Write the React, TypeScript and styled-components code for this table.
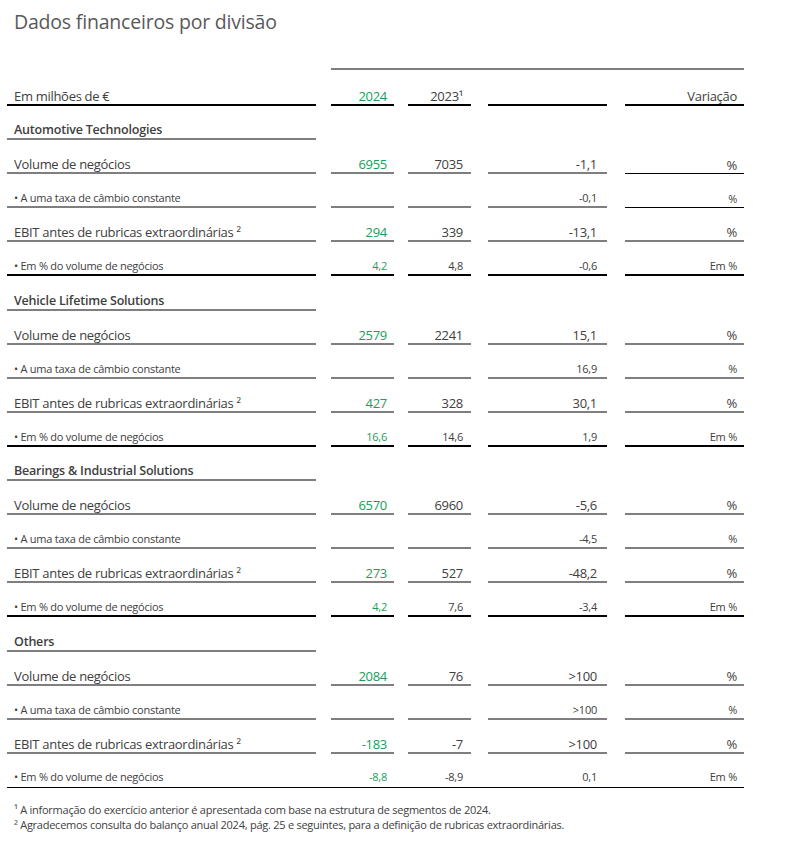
import React from "react"
import styled, { createGlobalStyle, css } from "styled-components"

const colors = {
  text: "#404040",
  title: "#595959",
  green: "#16a05a",
  rule: "#7f7f7f",
  black: "#000000",
}

type Line = "gray" | "black" | "thin" | "none"

// column widths and the gap before each column
const COLS = [
  { w: 309, gap: 0, pad: 7 },
  { w: 63, gap: 15, pad: 7 },
  { w: 63, gap: 14, pad: 8 },
  { w: 119, gap: 17, pad: 10 },
  { w: 119, gap: 18, pad: 7 },
]

const GlobalStyle = createGlobalStyle`
  body {
    margin: 0;
    background: #fff;
    font-family: "Open Sans", "Noto Sans", sans-serif;
    color: ${colors.text};
  }`

const Page = styled.div`
  padding: 8px 0 0 7px;
  width: 737px;`

const Title = styled.h1`
  margin: 0 0 0 7px;
  font-size: 19.5px;
  font-weight: 400;
  line-height: 28px;
  color: ${colors.title};
  letter-spacing: -0.2px;`

const TopRule = styled.div`
  margin: 32px 0 0 324px;
  width: 413px;
  border-top: 2px solid ${colors.rule};`

const lineCss = (line: Line) => {
  if (line === "gray") return css`border-bottom: 2px solid ${colors.rule};`
  if (line === "black") return css`border-bottom: 2px solid ${colors.black};`
  if (line === "thin") return css`border-bottom: 1px solid ${colors.black};`
  return css`border-bottom: 2px solid transparent;`
}

const Row = styled.div<{ $h: number; $rule?: boolean }>`
  display: flex;
  height: ${p => p.$h}px;
  box-sizing: border-box;
  ${p => p.$rule && `border-bottom: 1px solid ${colors.black};`}`

const Cell = styled.div<{
  $col: number
  $line: Line
  $small?: boolean
  $green?: boolean
  $bold?: boolean
}>`
  box-sizing: border-box;
  width: ${p => COLS[p.$col].w}px;
  margin-left: ${p => COLS[p.$col].gap}px;
  display: flex;
  align-items: flex-end;
  justify-content: ${p => (p.$col === 0 ? "flex-start" : "flex-end")};
  padding: ${p => (p.$col === 0 ? `0 0 0 ${COLS[0].pad}px` : `0 ${COLS[p.$col].pad}px 0 0`)};
  font-size: ${p => (p.$bold ? "12.5px" : p.$small ? "11px" : "13px")};
  line-height: 16px;
  letter-spacing: ${p => (p.$bold ? "-0.2px" : p.$small ? "-0.25px" : "-0.3px")};
  font-weight: ${p => (p.$bold ? 600 : 400)};
  color: ${p => (p.$green ? colors.green : colors.text)};
  white-space: nowrap;
  ${p => lineCss(p.$line)}`

const Footnotes = styled.div`
  margin: 14px 0 0 7px;
  font-size: 11px;
  line-height: 15px;
  letter-spacing: -0.25px;
  color: ${colors.text};`

type Section = {
  name: string
  rows: string[][]
  unitLines: Line[]
  lastRule?: boolean
}

const sections: Section[] = [
  {
    name: "Automotive Technologies",
    rows: [
      ["Volume de negócios", "6955", "7035", "-1,1", "%"],
      ["• A uma taxa de câmbio constante", "", "", "-0,1", "%"],
      ["EBIT antes de rubricas extraordinárias ²", "294", "339", "-13,1", "%"],
      ["• Em % do volume de negócios", "4,2", "4,8", "-0,6", "Em %"],
    ],
    unitLines: ["thin", "thin", "gray", "black"],
  },
  {
    name: "Vehicle Lifetime Solutions",
    rows: [
      ["Volume de negócios", "2579", "2241", "15,1", "%"],
      ["• A uma taxa de câmbio constante", "", "", "16,9", "%"],
      ["EBIT antes de rubricas extraordinárias ²", "427", "328", "30,1", "%"],
      ["• Em % do volume de negócios", "16,6", "14,6", "1,9", "Em %"],
    ],
    unitLines: ["gray", "gray", "gray", "black"],
  },
  {
    name: "Bearings & Industrial Solutions",
    rows: [
      ["Volume de negócios", "6570", "6960", "-5,6", "%"],
      ["• A uma taxa de câmbio constante", "", "", "-4,5", "%"],
      ["EBIT antes de rubricas extraordinárias ²", "273", "527", "-48,2", "%"],
      ["• Em % do volume de negócios", "4,2", "7,6", "-3,4", "Em %"],
    ],
    unitLines: ["gray", "gray", "gray", "black"],
  },
  {
    name: "Others",
    rows: [
      ["Volume de negócios", "2084", "76", ">100", "%"],
      ["• A uma taxa de câmbio constante", "", "", ">100", "%"],
      ["EBIT antes de rubricas extraordinárias ²", "-183", "-7", ">100", "%"],
      ["• Em % do volume de negócios", "-8,8", "-8,9", "0,1", "Em %"],
    ],
    unitLines: ["gray", "gray", "gray", "gray"],
    lastRule: true,
  },
]

const ROW_H = 34.1

type RowProps = { cells: string[]; index: number; section: Section }

const DataRow = ({ cells, index, section }: RowProps) => {
  const last = index === section.rows.length - 1
  const fullRule = last && !!section.lastRule
  const base: Line = fullRule ? "none" : last ? "black" : "gray"
  return (
    <Row $h={ROW_H} $rule={fullRule}>
      {cells.map((c, i) => {
        const line: Line = fullRule ? "none" : i === 4 ? section.unitLines[index] : base
        return (
          <Cell key={i} $col={i} $line={line} $small={index % 2 === 1} $green={i === 1}>
            {c}
          </Cell>
        )
      })}
    </Row>
  )
}

export default function App() {
  return (
    <>
      <GlobalStyle />
      <Page>
        <Title>Dados financeiros por divisão</Title>
        <TopRule />
        <Row $h={36}>
          <Cell $col={0} $line="black">Em milhões de €</Cell>
          <Cell $col={1} $line="black" $green>2024</Cell>
          <Cell $col={2} $line="black">2023¹</Cell>
          <Cell $col={3} $line="black" />
          <Cell $col={4} $line="black">Variação</Cell>
        </Row>
        {sections.map(s => (
          <React.Fragment key={s.name}>
            <Row $h={ROW_H}>
              <Cell $col={0} $line="gray" $bold>{s.name}</Cell>
            </Row>
            {s.rows.map((r, i) => (
              <DataRow key={i} cells={r} index={i} section={s} />
            ))}
          </React.Fragment>
        ))}
        <Footnotes>
          <div>¹ A informação do exercício anterior é apresentada com base na estrutura de segmentos de 2024.</div>
          <div>² Agradecemos consulta do balanço anual 2024, pág. 25 e seguintes, para a definição de rubricas extraordinárias.</div>
        </Footnotes>
      </Page>
    </>
  )
}
